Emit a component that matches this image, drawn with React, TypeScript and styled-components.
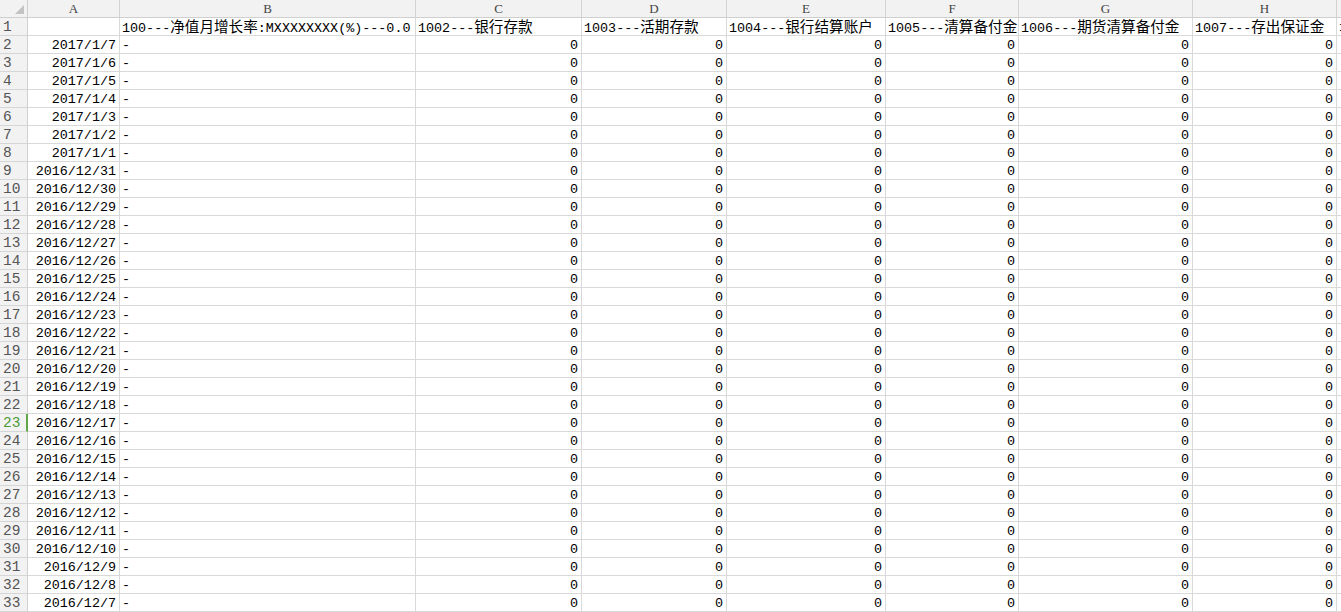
import React from "react";
import styled, { createGlobalStyle } from "styled-components";

const Global = createGlobalStyle`
  html, body { margin: 0; padding: 0; background: #ffffff; overflow: hidden; }
  #root { width: 1341px; height: 612px; overflow: hidden; }
`;

const COLS = [
  { key: "A", w: 92 },
  { key: "B", w: 296 },
  { key: "C", w: 166 },
  { key: "D", w: 145 },
  { key: "E", w: 159 },
  { key: "F", w: 133 },
  { key: "G", w: 174 },
  { key: "H", w: 144 },
  { key: "I", w: 120 },
];

const HEAD = [
  "",
  "100---净值月增长率:MXXXXXXXX(%)---0.0",
  "1002---银行存款",
  "1003---活期存款",
  "1004---银行结算账户",
  "1005---清算备付金",
  "1006---期货清算备付金",
  "1007---存出保证金",
  "1008---",
];

const DATES = [
  "2017/1/7", "2017/1/6", "2017/1/5", "2017/1/4", "2017/1/3", "2017/1/2", "2017/1/1",
  ...Array.from({ length: 25 }, (_, i) => `2016/12/${31 - i}`),
];

const Sheet = styled.div`
  display: grid;
  grid-template-columns: 28px ${COLS.map((c) => `${c.w}px`).join(" ")};
  grid-auto-rows: 18px;
  width: max-content;
  font-family: "Liberation Mono", "Noto Sans CJK SC", monospace;
  font-size: 13.4px;
  color: #000;
`;

const Corner = styled.div`
  position: relative;
  box-sizing: border-box;
  background: #f2f2f2;
  border-right: 1px solid #cfcfcf;
  border-bottom: 1px solid #cfcfcf;
  &::after {
    content: "";
    position: absolute;
    right: 3px;
    bottom: 3px;
    width: 0;
    height: 0;
    border-left: 9px solid transparent;
    border-bottom: 9px solid #c3c3c3;
  }
`;

const ColHeader = styled.div`
  box-sizing: border-box;
  background: #f2f2f2;
  border-right: 1px solid #d2d2d2;
  border-bottom: 1px solid #cfcfcf;
  text-align: center;
  font-family: "Liberation Serif", "DejaVu Serif", serif;
  font-size: 13px;
  line-height: 18px;
  color: #444;
  overflow: hidden;
`;

const RowHeader = styled.div<{ $active?: boolean }>`
  box-sizing: border-box;
  background: #f2f2f2;
  border-right: ${(p) => (p.$active ? "2px solid #5fa644" : "1px solid #cfcfcf")};
  border-bottom: 1px solid #d6d6d6;
  padding: 1px 0 0 3px;
  line-height: 17px;
  font-size: 14.5px;
  color: ${(p) => (p.$active ? "#4e9a38" : "#555")};
  overflow: hidden;
`;

const Cell = styled.div<{ $align?: "left" | "right" }>`
  box-sizing: border-box;
  border-right: 1px solid #d9d9d9;
  border-bottom: 1px solid #d9d9d9;
  padding: 1px 3px 0 2px;
  line-height: 17px;
  text-align: ${(p) => p.$align ?? "right"};
  white-space: nowrap;
  overflow: hidden;
`;

const Han = styled.span`
  font-family: "Noto Sans CJK SC", sans-serif;
  font-size: 14.6px;
  line-height: 1;
`;

function mixed(text: string) {
  return text.split(/([\u4e00-\u9fff]+)/).map((part, i) =>
    /[\u4e00-\u9fff]/.test(part) ? <Han key={i}>{part}</Han> : <React.Fragment key={i}>{part}</React.Fragment>
  );
}

export default function App() {
  return (
    <>
      <Global />
      <Sheet>
        <Corner />
        {COLS.map((c) => (
          <ColHeader key={c.key}>{c.key}</ColHeader>
        ))}

        <RowHeader>1</RowHeader>
        {HEAD.map((h, i) => (
          <Cell key={i} $align="left">
            {mixed(h)}
          </Cell>
        ))}

        {DATES.map((d, r) => {
          const rowNo = r + 2;
          return (
            <React.Fragment key={d}>
              <RowHeader $active={rowNo === 23}>{rowNo}</RowHeader>
              <Cell>{d}</Cell>
              <Cell $align="left">-</Cell>
              {COLS.slice(2, 8).map((c) => (
                <Cell key={c.key}>0</Cell>
              ))}
              <Cell $align="left" />
            </React.Fragment>
          );
        })}
      </Sheet>
    </>
  );
}
